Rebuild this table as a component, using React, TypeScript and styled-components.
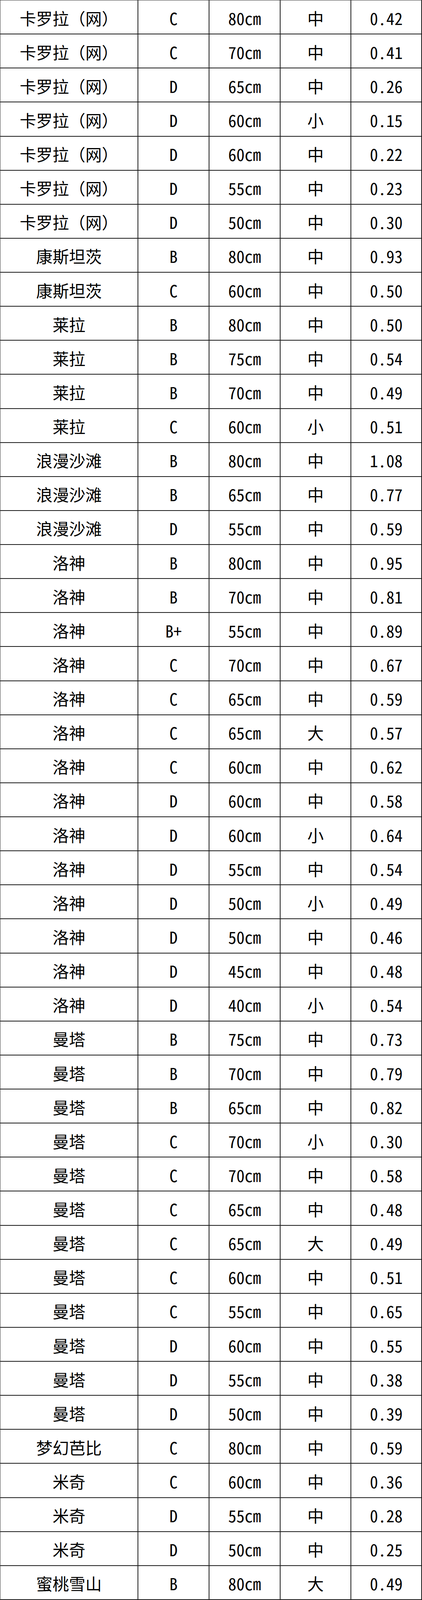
import styled, { createGlobalStyle } from 'styled-components'

type Row = [string, string, string, string, string]

const rows: Row[] = [
    ['卡罗拉（网）', 'C', '80cm', '中', '0.42'],
    ['卡罗拉（网）', 'C', '70cm', '中', '0.41'],
    ['卡罗拉（网）', 'D', '65cm', '中', '0.26'],
    ['卡罗拉（网）', 'D', '60cm', '小', '0.15'],
    ['卡罗拉（网）', 'D', '60cm', '中', '0.22'],
    ['卡罗拉（网）', 'D', '55cm', '中', '0.23'],
    ['卡罗拉（网）', 'D', '50cm', '中', '0.30'],
    ['康斯坦茨', 'B', '80cm', '中', '0.93'],
    ['康斯坦茨', 'C', '60cm', '中', '0.50'],
    ['莱拉', 'B', '80cm', '中', '0.50'],
    ['莱拉', 'B', '75cm', '中', '0.54'],
    ['莱拉', 'B', '70cm', '中', '0.49'],
    ['莱拉', 'C', '60cm', '小', '0.51'],
    ['浪漫沙滩', 'B', '80cm', '中', '1.08'],
    ['浪漫沙滩', 'B', '65cm', '中', '0.77'],
    ['浪漫沙滩', 'D', '55cm', '中', '0.59'],
    ['洛神', 'B', '80cm', '中', '0.95'],
    ['洛神', 'B', '70cm', '中', '0.81'],
    ['洛神', 'B+', '55cm', '中', '0.89'],
    ['洛神', 'C', '70cm', '中', '0.67'],
    ['洛神', 'C', '65cm', '中', '0.59'],
    ['洛神', 'C', '65cm', '大', '0.57'],
    ['洛神', 'C', '60cm', '中', '0.62'],
    ['洛神', 'D', '60cm', '中', '0.58'],
    ['洛神', 'D', '60cm', '小', '0.64'],
    ['洛神', 'D', '55cm', '中', '0.54'],
    ['洛神', 'D', '50cm', '小', '0.49'],
    ['洛神', 'D', '50cm', '中', '0.46'],
    ['洛神', 'D', '45cm', '中', '0.48'],
    ['洛神', 'D', '40cm', '小', '0.54'],
    ['曼塔', 'B', '75cm', '中', '0.73'],
    ['曼塔', 'B', '70cm', '中', '0.79'],
    ['曼塔', 'B', '65cm', '中', '0.82'],
    ['曼塔', 'C', '70cm', '小', '0.30'],
    ['曼塔', 'C', '70cm', '中', '0.58'],
    ['曼塔', 'C', '65cm', '中', '0.48'],
    ['曼塔', 'C', '65cm', '大', '0.49'],
    ['曼塔', 'C', '60cm', '中', '0.51'],
    ['曼塔', 'C', '55cm', '中', '0.65'],
    ['曼塔', 'D', '60cm', '中', '0.55'],
    ['曼塔', 'D', '55cm', '中', '0.38'],
    ['曼塔', 'D', '50cm', '中', '0.39'],
    ['梦幻芭比', 'C', '80cm', '中', '0.59'],
    ['米奇', 'C', '60cm', '中', '0.36'],
    ['米奇', 'D', '55cm', '中', '0.28'],
    ['米奇', 'D', '50cm', '中', '0.25'],
    ['蜜桃雪山', 'B', '80cm', '大', '0.49'],
]

export default function App() {
    return (
        <>
            <GlobalStyle />
            <Sheet $rows={rows.length}>
                {rows.map((row, i) =>
                    row.map((value, j) => (
                        <Cell key={`${i}-${j}`} $name={j === 0}>
                            {value}
                        </Cell>
                    ))
                )}
            </Sheet>
        </>
    )
}

const GlobalStyle = createGlobalStyle`
    html, body {
        margin: 0;
        padding: 0;
        background: #ffffff;
    }
`

const Sheet = styled.div<{ $rows: number }>`
    display: grid;
    grid-template-columns: 353fr 182fr 182fr 181fr 181fr;
    grid-template-rows: repeat(${(p) => p.$rows}, minmax(0, 1fr));
    width: 100%;
    height: 100vh;
    overflow: hidden;
    box-sizing: border-box;
    border-top: 1px solid #333;
    border-left: 1px solid #333;
    background: #fff;
`

// ascii in half-width cells, like the sheet's 黑体 font; names keep full-width （）
const Cell = styled.div<{ $name?: boolean }>`
    display: flex;
    align-items: center;
    justify-content: center;
    box-sizing: border-box;
    padding-top: 4px;
    border-right: 2px solid #1a1a1a;
    border-bottom: 2px solid #1a1a1a;
    font-family: "Noto Sans CJK SC", "Noto Sans", sans-serif;
    font-feature-settings: ${(p) => (p.$name ? 'normal' : '"hwid" 1')};
    font-size: 42px;
    line-height: 1;
    color: #000;
    white-space: nowrap;
`
